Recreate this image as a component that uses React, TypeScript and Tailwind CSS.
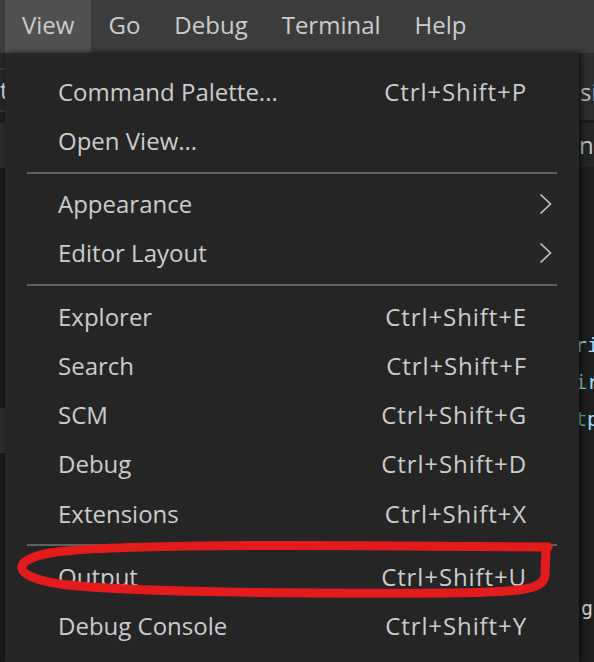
type Item =
  | { kind: 'item'; label: string; shortcut?: string; submenu?: boolean }
  | { kind: 'sep' };

const menuBar = ['View', 'Go', 'Debug', 'Terminal', 'Help'];

const items: Item[] = [
  { kind: 'item', label: 'Command Palette...', shortcut: 'Ctrl+Shift+P' },
  { kind: 'item', label: 'Open View...' },
  { kind: 'sep' },
  { kind: 'item', label: 'Appearance', submenu: true },
  { kind: 'item', label: 'Editor Layout', submenu: true },
  { kind: 'sep' },
  { kind: 'item', label: 'Explorer', shortcut: 'Ctrl+Shift+E' },
  { kind: 'item', label: 'Search', shortcut: 'Ctrl+Shift+F' },
  { kind: 'item', label: 'SCM', shortcut: 'Ctrl+Shift+G' },
  { kind: 'item', label: 'Debug', shortcut: 'Ctrl+Shift+D' },
  { kind: 'item', label: 'Extensions', shortcut: 'Ctrl+Shift+X' },
  { kind: 'sep' },
  { kind: 'item', label: 'Output', shortcut: 'Ctrl+Shift+U' },
  { kind: 'item', label: 'Debug Console', shortcut: 'Ctrl+Shift+Y' },
];

function Chevron() {
  return (
    <svg width={13} height={22} viewBox="0 0 13 22" fill="none">
      <polyline points="1.5,1.5 11.5,11 1.5,20.5" stroke="#c8c8c8" strokeWidth={1.6} />
    </svg>
  );
}

export default function App() {
  return (
    <div
      className="relative h-[662px] w-[594px] overflow-hidden bg-[#1e1e1e] text-[#cccccc]"
      style={{ fontFamily: '"Open Sans", "Noto Sans", sans-serif' }}
    >
      {/* menu bar */}
      <div className="flex h-[53px] items-stretch bg-[#3c3c3c] pl-[5px] text-[24px]">
        {menuBar.map((m, i) => (
          <div key={m} className={`flex items-center px-[17px] pb-[4px] ${i === 0 ? 'bg-[#505050]' : ''}`}>
            {m}
          </div>
        ))}
      </div>

      {/* workbench behind the menu */}
      <div className="flex h-[609px]">
        <div className="flex w-[300px] shrink-0 flex-col bg-[#181818]">
          <div className="h-[15px] bg-[#252526]" />
          <div className="h-[2px] bg-[#3a3a3a]" />
          <div className="flex h-[40px] items-center bg-[#252526] text-[24px] text-[#d0d8e0]">
            <span>t</span>
          </div>
          <div className="h-[2px] bg-[#333]" />
          <div className="h-[11px] bg-[#1e1e1e]" />
          <div className="h-[45px] bg-[#2d2d2d]" />
          <div className="h-[240px]" />
          <div className="h-[45px] bg-[#2d2d2d]" />
        </div>
        <div className="flex min-w-0 flex-1 flex-col">
          <div className="flex h-[67px] items-center bg-[#2d2d2d] pl-[280px] pt-[10px] text-[24px] text-[#b8c4d0]">
            <span className="whitespace-nowrap">sion</span>
          </div>
          <div className="h-[3px] bg-[#1b1b1b]" />
          <div className="flex h-[44px] items-center bg-[#252526] pl-[279px] text-[24px] text-[#c0c8d0]">
            <span className="whitespace-nowrap">nc</span>
          </div>
          <div
            className="flex flex-col pl-[275px] pt-[160px] text-[20px] leading-[37px]"
            style={{ fontFamily: '"DejaVu Sans Mono", monospace' }}
          >
            <span className="whitespace-nowrap text-[#9cdcfe]">ri</span>
            <span className="whitespace-nowrap text-[#9cdcfe]">ir</span>
            <span className="whitespace-nowrap">
              <span className="text-[#4ec9b0]">t</span>
              <span className="text-[#9cdcfe]">p</span>
            </span>
            <span className="mt-[152px] whitespace-nowrap pl-[6px] text-[#d4d4d4]">g</span>
          </div>
        </div>
      </div>

      {/* dropdown menu */}
      <div className="absolute left-[5px] top-[53px] w-[574px] bg-[#252526] pt-[14px] pb-[12px] shadow-[2px_0_6px_rgba(0,0,0,0.7)]">
        {items.map((it, idx) =>
          it.kind === 'sep' ? (
            <div key={idx} className="flex h-[14px] items-center px-[22px]">
              <div className="h-[2px] w-full bg-[#5f5f5f]" />
            </div>
          ) : (
            <div key={idx} className="flex h-[49.25px] items-center pl-[53px] pr-[27px] text-[24px]">
              <span className="flex-1">{it.label}</span>
              {it.shortcut && <span className="tracking-[0.9px]">{it.shortcut}</span>}
              <span className="flex w-[25px] justify-end">{it.submenu && <Chevron />}</span>
            </div>
          ),
        )}
      </div>

      {/* red annotation */}
      <svg className="pointer-events-none absolute inset-0" width={594} height={662}>
        <path
          d="M 548 547 L 400 546 C 250 545 100 545 50 553 C 10 560 12 577 60 584 C 120 592 300 594 450 593 C 520 592 544 590 545 575 L 546 549"
          fill="none"
          stroke="#e41b1b"
          strokeWidth={9}
          strokeLinecap="round"
          strokeLinejoin="round"
        />
      </svg>
    </div>
  );
}
